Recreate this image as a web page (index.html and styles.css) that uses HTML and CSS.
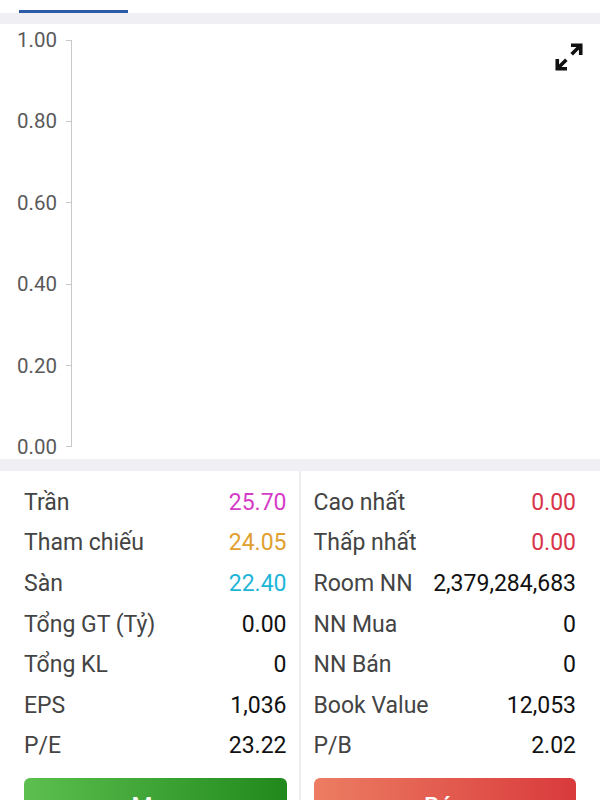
FILE: index.html
```html
<!DOCTYPE html>
<html lang="vi">

<head>
    <meta charset="UTF-8">
    <meta name="viewport" content="width=device-width, initial-scale=1.0">
    <title>Chi tiết mã</title>
    <link rel="stylesheet" href="styles.css">
</head>

<body>
    <div class="tabs">
        <div class="tab active"></div>
    </div>

    <div class="chart">
        <div class="axis">
            <div class="tick"><span>1.00</span></div>
            <div class="tick"><span>0.80</span></div>
            <div class="tick"><span>0.60</span></div>
            <div class="tick"><span>0.40</span></div>
            <div class="tick"><span>0.20</span></div>
            <div class="tick"><span>0.00</span></div>
        </div>
        <div class="plot"></div>
        <button class="expand" aria-label="Phóng to">
            <svg width="32" height="32" viewBox="0 0 24 24">
                <path d="M13.5 3.2H20.8V10.5M20.8 3.2L14 10" fill="none" stroke="#111" stroke-width="2.7" />
                <path d="M3.2 13.5V20.8H10.5M3.2 20.8L10 14" fill="none" stroke="#111" stroke-width="2.7" />
            </svg>
        </button>
    </div>

    <div class="stats">
        <div class="col">
            <div class="row"><span class="label">Trần</span><span class="ceil">25.70</span></div>
            <div class="row"><span class="label">Tham chiếu</span><span class="ref">24.05</span></div>
            <div class="row"><span class="label">Sàn</span><span class="floor">22.40</span></div>
            <div class="row"><span class="label">Tổng GT (Tỷ)</span><span>0.00</span></div>
            <div class="row"><span class="label">Tổng KL</span><span>0</span></div>
            <div class="row"><span class="label">EPS</span><span>1,036</span></div>
            <div class="row"><span class="label">P/E</span><span>23.22</span></div>
            <button class="btn buy">Mua</button>
        </div>
        <div class="col">
            <div class="row"><span class="label">Cao nhất</span><span class="down">0.00</span></div>
            <div class="row"><span class="label">Thấp nhất</span><span class="down">0.00</span></div>
            <div class="row"><span class="label">Room NN</span><span>2,379,284,683</span></div>
            <div class="row"><span class="label">NN Mua</span><span>0</span></div>
            <div class="row"><span class="label">NN Bán</span><span>0</span></div>
            <div class="row"><span class="label">Book Value</span><span>12,053</span></div>
            <div class="row"><span class="label">P/B</span><span>2.02</span></div>
            <button class="btn sell">Bán</button>
        </div>
    </div>
</body>

</html>
```

FILE: styles.css
```css
body {
    margin: 0;
    font-family: Roboto, "Noto Sans", Arial, sans-serif;
    background-color: #fff;
    color: #111;
}

.tabs {
    height: 13px;
    padding-left: 19px;
    border-bottom: 11px solid #efeff4;
    display: flex;
    align-items: flex-end;
}

.tab.active {
    width: 109px;
    height: 3px;
    background-color: #2a5aa8;
}

.chart {
    position: relative;
    height: 435px;
    display: flex;
    border-bottom: 12px solid #efeff4;
}

.axis {
    width: 72px;
    height: 407px;
    margin-top: 16px;
    box-sizing: border-box;
    display: flex;
    flex-direction: column;
    justify-content: space-between;
    border-right: 1px solid #c8c8c8;
}

.tick {
    height: 0;
    display: flex;
    align-items: center;
    justify-content: flex-end;
    position: relative;
}

.tick span {
    font-size: 20.5px;
    color: #5a5a5a;
    padding-right: 14px;
    line-height: 22px;
}

.tick::after {
    content: "";
    width: 5px;
    height: 1px;
    background-color: #c8c8c8;
    position: absolute;
    right: 0;
}

.plot {
    flex: 1;
}

.expand {
    position: absolute;
    top: 17px;
    right: 15px;
    border: none;
    background: none;
    padding: 0;
}

.stats {
    display: flex;
}

.col {
    flex: 1;
    padding: 11px 24px 0 24px;
}

.col:first-child {
    padding-right: 12px;
    border-right: 2px solid #eeeeee;
}

.col:last-child {
    padding-left: 13px;
}

.row {
    display: flex;
    justify-content: space-between;
    align-items: center;
    height: 40.6px;
    font-size: 23px;
}

.label {
    color: #444;
}

.ceil {
    color: #d63dc6;
}

.ref {
    color: #e0a030;
}

.floor {
    color: #1fb5d8;
}

.down {
    color: #d9344a;
}

.btn {
    width: 100%;
    height: 56px;
    margin-top: 12px;
    border: none;
    border-radius: 6px;
    color: #fff;
    font-family: inherit;
    font-size: 24px;
    font-weight: 500;
}

.buy {
    background: linear-gradient(to right, #5cbf4f, #21891c);
}

.sell {
    background: linear-gradient(to right, #ec7d62, #d93a3c);
}
```
